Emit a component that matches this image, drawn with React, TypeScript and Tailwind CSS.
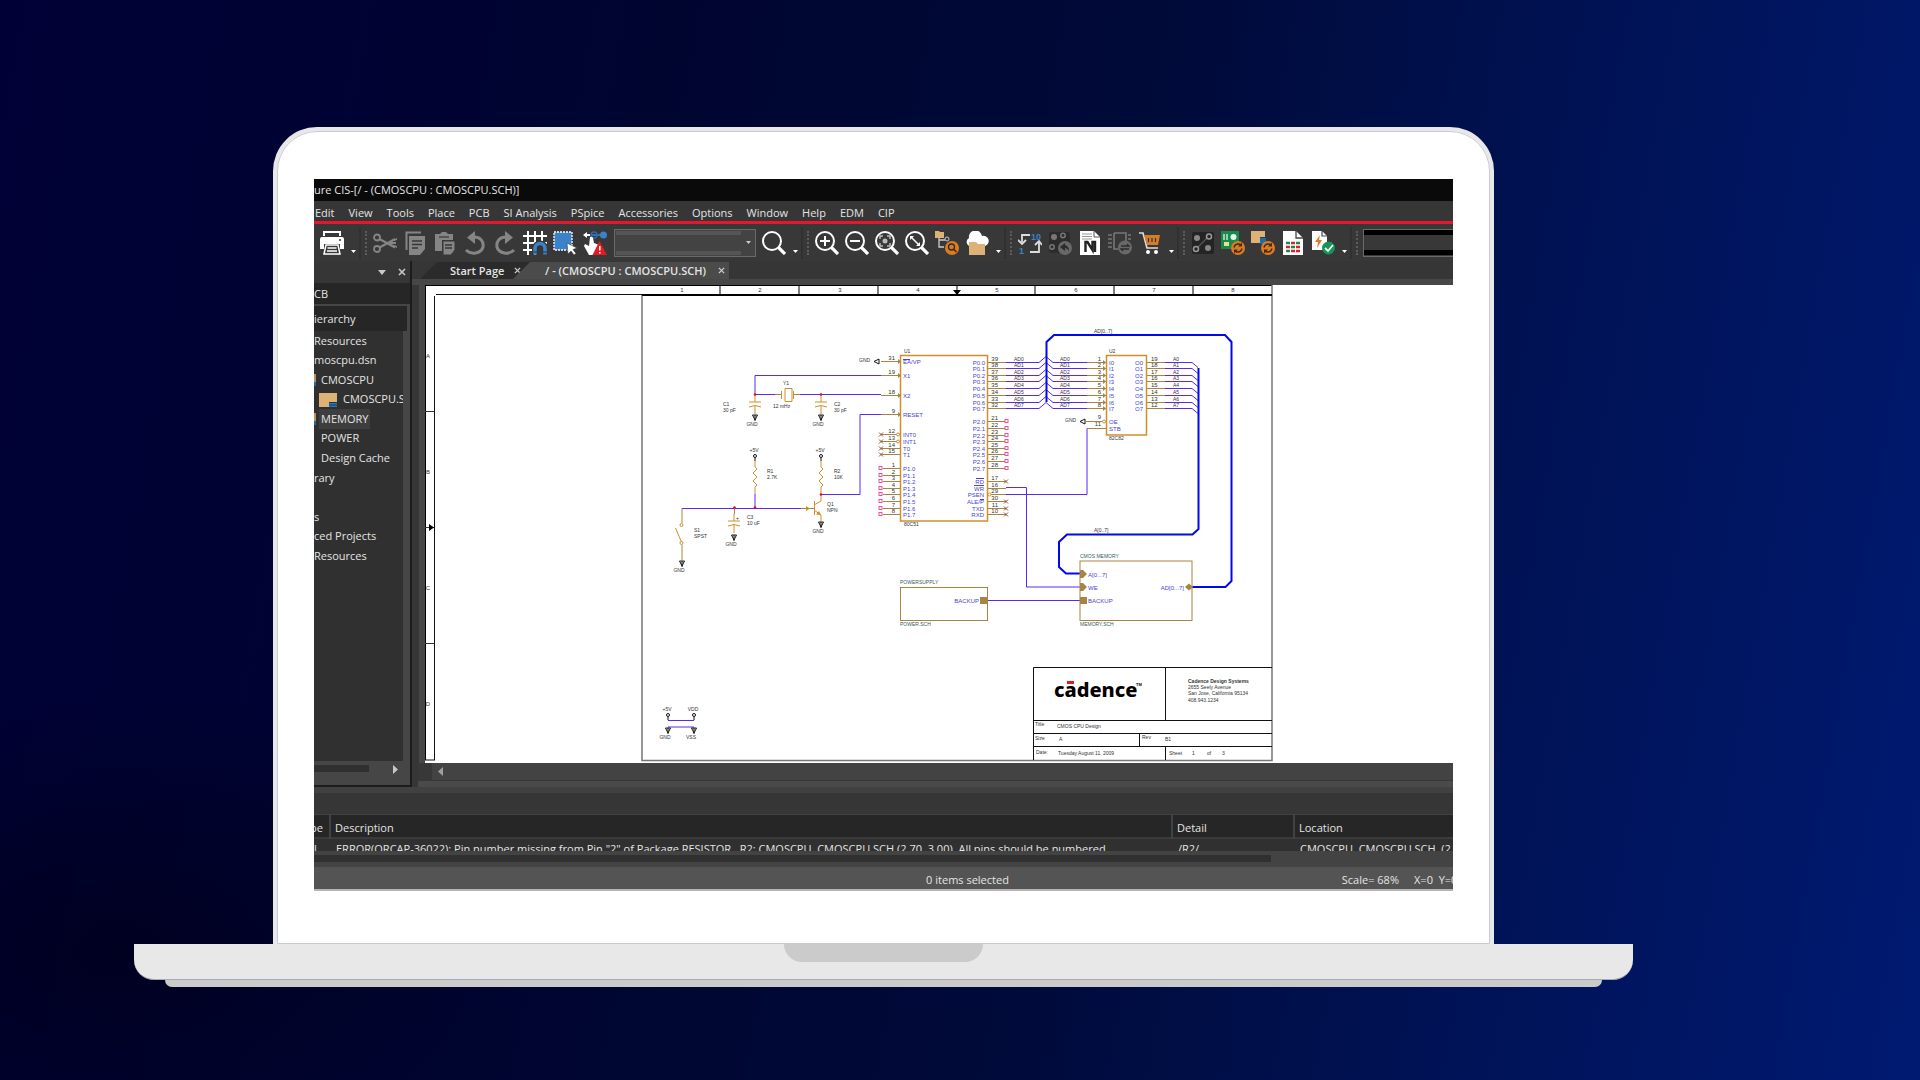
import type { ReactNode } from "react";

const WIRE = "#5a28f0";
const PIN = "#a88442";
const PART = "#cf8f2a";
const NAME = "#4a3fd0";
const INK = "#333333";
const BUS = "#0008ee";

/* ---------- toolbar icons (24x24) ---------- */

function Ico({ children }: { children: ReactNode }) {
  return (
    <svg viewBox="0 0 24 24" className="size-6 shrink-0" fill="none" aria-hidden="true">
      {children}
    </svg>
  );
}

const GREY = "#858585";

const Printer = () => (
  <Ico>
    <path d="M4 5V1h16v4" stroke="#fff" strokeWidth="2" />
    <path d="M2 6h20q2 0 2 2v10h-4v-5H4v5H0V8q0-2 2-2z" fill="#fff" />
    <path d="M4 23l2-9h12l2 9z" stroke="#fff" strokeWidth="1.5" />
    <path d="M7.500 17h9M7 20h10" stroke="#fff" strokeWidth="1.500" />
    <circle cx="20" cy="9" r="1" fill="#333" />
  </Ico>
);
const Cut = () => (
  <Ico>
    <circle cx="4" cy="6.500" r="3" stroke={GREY} strokeWidth="1.800" />
    <circle cx="4" cy="18" r="3" stroke={GREY} strokeWidth="1.800" />
    <path d="M6.500 8L22 16.500M6.500 16.500L22 8M14 12h9" stroke={GREY} strokeWidth="2" />
    <path d="M14 12l10-5v2zM14 12l10 5v-2z" fill={GREY} />
  </Ico>
);
const Copy = () => (
  <Ico>
    <path d="M3.500 19V1.500H18" stroke={GREY} strokeWidth="2" />
    <path d="M6 5h16v13l-5 6H6z" fill={GREY} />
    <path d="M9 10h10M9 13.500h10M9 17h6" stroke="#363636" strokeWidth="1.400" />
  </Ico>
);
const Paste = () => (
  <Ico>
    <path d="M2 3h5l2-2h4l2 2h5v6H9v11H2z" fill={GREY} />
    <path d="M6 6h10" stroke="#363636" strokeWidth="1.200" />
    <path d="M10 10h12v9l-4 5h-8z" fill={GREY} stroke="#363636" strokeWidth="1" />
    <path d="M12 14h7M12 17h7" stroke="#363636" strokeWidth="1.300" />
  </Ico>
);
const Undo = () => (
  <Ico>
    <path d="M3 19c5 5 15 4 17-3 1-6-3-10-9-10" stroke={GREY} strokeWidth="3" />
    <path d="M4 6.500L12 0v13z" fill={GREY} />
  </Ico>
);
const Redo = () => (
  <Ico>
    <path d="M21 19c-5 5-15 4-17-3-1-6 3-10 9-10" stroke={GREY} strokeWidth="3" />
    <path d="M20 6.500L12 0v13z" fill={GREY} />
  </Ico>
);
const GridMagnet = () => (
  <Ico>
    <path d="M5 0v24M12 0v24M19 0v10M0 5h24M0 12h24M0 19h9" stroke="#fff" strokeWidth="2" />
    <path d="M12 23.500v-6a5 5 0 0 1 10 0v6" stroke="#363636" strokeWidth="6" />
    <path d="M12 23.500v-6a5 5 0 0 1 10 0v6" stroke="#3b82c8" strokeWidth="3.600" />
    <path d="M10 21h4M20 21h4" stroke="#363636" strokeWidth="1" />
  </Ico>
);
const SelectArea = () => (
  <Ico>
    <rect x="1" y="1" width="18" height="18" fill="#3b82c8" stroke="#fff" strokeWidth="1.300" strokeDasharray="2 1" />
    <path d="M14 12l10 5-4 1.500 3 4-2 1.500-3-4-3 3z" fill="#fff" stroke="#363636" strokeWidth=".6" />
  </Ico>
);
const HandWarn = () => (
  <Ico>
    <path d="M8 4h12" stroke="#3b82c8" strokeWidth="1.500" />
    <circle cx="11" cy="4" r="3" stroke="#2b6aa8" strokeWidth="1.500" />
    <circle cx="20.500" cy="4" r="3.500" fill="#3b82c8" />
    <path d="M0 4l4-3v2h3v2H4v2z" fill="#fff" />
    <path d="M7 6q2-1 3 1l1 5 5 2v4l-3 6H6L1 15l1-2 4 2z" fill="#fff" />
    <path d="M16.500 10L24 24H9.500z" fill="#e01b24" />
    <path d="M16.800 15v4.500M16.800 21v1.500" stroke="#fff" strokeWidth="1.500" />
  </Ico>
);
function Lens({ children }: { children?: ReactNode }) {
  return (
    <Ico>
      <circle cx="10" cy="10" r="9" stroke="#fff" strokeWidth="2" />
      <path d="M16.500 16.500L23 23" stroke="#fff" strokeWidth="3.200" />
      {children}
    </Ico>
  );
}
const ZoomIn = () => (
  <Lens>
    <path d="M10 5v10M5 10h10" stroke="#fff" strokeWidth="2" />
  </Lens>
);
const ZoomOut = () => (
  <Lens>
    <path d="M5 10h10" stroke="#fff" strokeWidth="2" />
  </Lens>
);
const ZoomFit = () => (
  <Lens>
    <path d="M5 8V5h3M12 5h3v3M15 12v3h-3M8 15H5v-3" stroke="#bbb" strokeWidth="1.500" />
    <circle cx="10" cy="10" r="2.500" fill="#bbb" />
  </Lens>
);
const ZoomArea = () => (
  <Lens>
    <path d="M6 6l8 8" stroke="#fff" strokeWidth="1.500" />
    <path d="M5 5h4L5 9zM15 15v-4l-4 4z" fill="#fff" />
  </Lens>
);
const TreeFind = () => (
  <Ico>
    <path d="M0 0h4l1 1h4v6H0z" fill="#dcb276" />
    <path d="M4 7v9h5M4 9h6" stroke="#ccc" strokeWidth="1.300" />
    <circle cx="12" cy="8" r="2" stroke="#ccc" />
    <circle cx="17" cy="17" r="7" fill="#d87d24" />
    <circle cx="16.500" cy="16" r="3" stroke="#3a2a1a" strokeWidth="1.300" />
    <path d="M18.500 18l3 3" stroke="#3a2a1a" strokeWidth="1.500" />
  </Ico>
);
const CloudFolder = () => (
  <Ico>
    <path d="M4 15a4.500 4.500 0 0 1 0-8 6.500 6.500 0 0 1 13-2 5 5 0 0 1 3 10z" fill="#fff" />
    <path d="M4 11h7l2 2h7v11H4z" fill="#dcb276" />
  </Ico>
);
const Annotate = () => (
  <Ico>
    <path d="M12 4H4v7M12 21h9v-9" stroke="#ddd" strokeWidth="1.800" />
    <path d="M0 9l4 4 4-4M17 14l4-4 3 4" stroke="#ddd" strokeWidth="1.800" />
    <text x="13" y="9" fontSize="9" fontWeight="700" fill="#3b82c8" fontFamily="Liberation Sans, sans-serif">10</text>
    <text x="1" y="23" fontSize="9" fontWeight="700" fill="#3b82c8" fontFamily="Liberation Sans, sans-serif">1</text>
  </Ico>
);
const BackAnnotate = () => (
  <Ico>
    <rect x="1" y="1" width="21" height="21" rx="2" fill="#2c2c2c" />
    <circle cx="6" cy="6" r="3" fill="#777" />
    <circle cx="15" cy="4.500" r="2.200" stroke="#777" strokeWidth="1.500" />
    <circle cx="4" cy="16" r="2.200" stroke="#777" strokeWidth="1.500" />
    <circle cx="17" cy="17" r="7" fill="#686868" />
    <path d="M12 16l5-4v2q4 1 4 6-2-3-4-3v3z" fill="#2c2c2c" />
  </Ico>
);
const Netlist = () => (
  <Ico>
    <path d="M2 0h14l6 6v18H2z" fill="#fff" />
    <path d="M4 3h10M4 5.500h10M4 8h10" stroke="#999" />
    <path d="M16 0v6h6" stroke="#555" />
    <path d="M7.500 21V11h2l5 8v-8h2.500v10" stroke="#222" strokeWidth="2.400" />
  </Ico>
);
const ChipSync = () => (
  <Ico>
    <path d="M14 2h4v8M6 2v16h7M6 2h8" stroke="#777" strokeWidth="1.600" />
    <path d="M0 4h4M0 8h4M0 12h4M0 16h4M20 4h3M20 8h3" stroke="#777" strokeWidth="1.500" />
    <circle cx="17" cy="16.500" r="7" fill="#686868" />
    <path d="M13 15h8l-2-2M21 18h-8l2 2" stroke="#2c2c2c" strokeWidth="1.300" />
  </Ico>
);
const Cart = () => (
  <Ico>
    <path d="M1 2h4l4 15h11" stroke="#ddd" strokeWidth="1.700" />
    <path d="M6 4h16l-2 10H9z" fill="#d87d24" />
    <path d="M10.500 7v4M14 7v4M17.500 7v4" stroke="#333" strokeWidth="1.200" />
    <circle cx="10" cy="21" r="2" fill="#fff" />
    <circle cx="18" cy="21" r="2" fill="#fff" />
  </Ico>
);
const Nodes = () => (
  <Ico>
    <rect x="1" y="1" width="22" height="22" rx="2" fill="#242424" />
    <path d="M7 16L16 7" stroke="#555" strokeWidth="1.200" />
    <circle cx="6" cy="7" r="3" fill="#888" />
    <circle cx="17" cy="17" r="3" fill="#888" />
    <circle cx="18" cy="5.500" r="2.500" fill="#242424" stroke="#999" strokeWidth="1.500" />
    <circle cx="5" cy="18" r="2.500" fill="#242424" stroke="#999" strokeWidth="1.500" />
  </Ico>
);
const SyncBadge = () => (
  <>
    <circle cx="17" cy="17" r="7" fill="#d87d24" />
    <path d="M13 16.500q1-4 5-3.500l2 1M21 17.500q-1 4-5 3.500l-2-1" stroke="#4a2a10" strokeWidth="1.400" />
    <path d="M21 11.500v4h-4zM13 22.500v-4h4z" fill="#4a2a10" />
  </>
);
const BoardSync = () => (
  <Ico>
    <path d="M0 0h18v18H0z" fill="#178a4c" />
    <path d="M3 3v6M6 3v6" stroke="#bfe8cf" strokeWidth="1.500" />
    <circle cx="12.500" cy="6" r="3" fill="#e4f3ea" />
    <path d="M3 11h5v4H3z" fill="#f3d98c" />
    <SyncBadge />
  </Ico>
);
const SchematicSync = () => (
  <Ico>
    <path d="M0 0h14v6H9v6H0z" fill="#dcb276" />
    <path d="M9 7h6v6H9z" fill="#1d6ca5" />
    <SyncBadge />
  </Ico>
);
const SheetPage = () => (
  <Ico>
    <path d="M2 0h13l7 7v17H2z" fill="#fff" />
    <path d="M15 0v7h7" stroke="#444" strokeWidth="1.300" />
    <path d="M5 12h4M15 12h4M10 16h4M5 20h4" stroke="#178a4c" strokeWidth="2.500" />
    <path d="M10 12h4M5 16h4M15 16h4M10 20h4M15 20h4" stroke="#d5222c" strokeWidth="2.500" />
  </Ico>
);
const PageCheck = () => (
  <Ico>
    <path d="M1 0h10l5 5v14H1z" fill="#fff" />
    <path d="M11 0v5h5" stroke="#444" strokeWidth="1.200" />
    <path d="M9 4l-5 7h3l-1 6 5-8H8z" fill="#d87d24" />
    <circle cx="17.500" cy="17" r="6.500" fill="#159455" />
    <path d="M14 17l3 3 5-6" stroke="#fff" strokeWidth="1.800" />
  </Ico>
);

/* ---------- toolbar pieces ---------- */

function Tool({ label, children }: { label: string; children: ReactNode }) {
  return (
    <button type="button" aria-label={label} className="flex w-[30px] shrink-0 items-center justify-center">
      {children}
    </button>
  );
}

function More() {
  return (
    <button type="button" aria-label="More tools" className="flex h-7 w-3 shrink-0 items-end justify-center pb-1">
      <svg viewBox="0 0 5 3" className="h-[3px] w-[5px]" aria-hidden="true">
        <path d="M0 0h5L2.500 3z" fill="#fff" />
      </svg>
    </button>
  );
}

function Grip() {
  return (
    <div className="flex h-8 w-[11px] shrink-0 items-center justify-center border-l-2 border-[#313131]">
      <div className="h-6 border-l-2 border-dotted border-[#5c5c5c]" />
    </div>
  );
}

/* ---------- schematic ---------- */

function T({
  x, y, children, c = INK, s = 5, a = "start", b = false,
}: {
  x: number; y: number; children: ReactNode; c?: string; s?: number; a?: "start" | "middle" | "end"; b?: boolean;
}) {
  return (
    <text x={x} y={y} fill={c} fontSize={s} textAnchor={a} fontWeight={b ? 700 : 400}>
      {children}
    </text>
  );
}

const L = ({ d, c = PIN, w = 1 }: { d: string; c?: string; w?: number }) => (
  <path d={d} stroke={c} strokeWidth={w} fill="none" />
);

const Cross = ({ x, y }: { x: number; y: number }) => (
  <L d={`M${x - 2} ${y - 2}l4 4m0-4l-4 4`} c="#8a5530" />
);
const Square = ({ x, y }: { x: number; y: number }) => (
  <rect x={x - 1.5} y={y - 1.5} width="3" height="3" fill="#fff" stroke="#f0509a" />
);
const Dot = ({ x, y }: { x: number; y: number }) => <circle cx={x} cy={y} r="1.300" fill="#e01020" />;

function Ground({ x, y, name = "GND" }: { x: number; y: number; name?: string }) {
  return (
    <g>
      <path d={`M${x - 2.5} ${y}h5l-2.500 5zm2.500 0v6`} stroke="#111" fill="none" />
      <T x={x - 3} y={y + 11} a="middle">{name}</T>
    </g>
  );
}
function Power({ x, y, name = "+5V" }: { x: number; y: number; name?: string }) {
  return (
    <g>
      <T x={x - 1} y={y - 4} a="middle">{name}</T>
      <circle cx={x} cy={y} r="1.500" stroke="#111" fill="none" />
      <L d={`M${x} ${y + 2}v3`} c="#111" />
    </g>
  );
}
function Cap({ x, y }: { x: number; y: number }) {
  return <L c={PART} d={`M${x} ${y}v7m-6 0h12m-12 5q6-3 12 0m-6-1v8`} />;
}
function Resistor({ x }: { x: number }) {
  return <L c={PART} d={`M${x} 461v6l2 2-4 4 4 4-4 4 4 4-2 2v7`} />;
}

const DATA_Y = [362, 368, 375, 381, 388, 395, 402, 408];
const P2_Y = [421, 428, 435, 441, 448, 454, 461, 468];
const P1_Y = [468, 475, 481, 488, 494, 501, 508, 514];
const LEFT_PINS: [string, string, number][] = [["31", "EA/VP", 361], ["19", "X1", 375], ["18", "X2", 395], ["9", "RESET", 414]];
const INT_PINS: [string, string, number][] = [["12", "INT0", 434], ["13", "INT1", 441], ["14", "T0", 448], ["15", "T1", 454]];
const CTRL_PINS: [string, string, number, boolean][] = [
  ["17", "RD", 481, true], ["16", "WR", 488, false], ["29", "PSEN", 494, false],
  ["30", "ALE/P", 501, true], ["11", "TXD", 508, true], ["10", "RXD", 514, true],
];
const TICKS = [720, 799, 878, 957, 1035, 1114, 1193];
const COLS = [682, 760, 840, 918, 997, 1076, 1154, 1233];

function Schematic() {
  return (
    <svg
      viewBox="425 285 1028 478"
      className="h-[478px] w-[1028px] max-w-none shrink-0 bg-white [font-family:'Liberation_Sans',Arial,sans-serif]"
      role="img"
      aria-label="CMOSCPU schematic page"
    >
      <path d="M425 285.500H1272M425.500 285V760" stroke="#000" />
      <path d="M436 294.500H1272M434.500 296V760M425 760h10" stroke="#111" strokeWidth="1" />
      <path d="M642 295V760.500H1272V285" stroke="#777" fill="none" strokeWidth="1.500" />
      <path d="M642 295h630" stroke="#000" strokeWidth="2" />
      {TICKS.map((x) => <L key={x} d={`M${x} 286v8`} c="#555" w={1.5} />)}
      {COLS.map((x, i) => <T key={x} x={x} y={292} a="middle" s={6}>{i + 1}</T>)}
      {["A", "B", "C", "D"].map((n, i) => <T key={n} x={428} y={358 + i * 116} a="middle" s={6}>{n}</T>)}
      <L d="M425 411.500h9M425 643.500h9M425 527.500h9" c="#333" />
      <path d="M429 524v7l5-3.500zM953 290h8l-4 5z" fill="#000" />

      {/* processor */}
      <rect x="900.500" y="355.500" width="87" height="165.500" stroke={PART} fill="none" strokeWidth="1.500" />
      <T x={904} y={353}>U1</T>
      <T x={904} y={526}>80C51</T>
      {LEFT_PINS.map(([n, name, y]) => (
        <g key={n}>
          <L d={`M881 ${y + 0.5}h19`} />
          <path d={`M898 ${y - 2}v5l3-2.500z`} fill={PIN} />
          <T x={895} y={y - 1} a="end" s={6}>{n}</T>
          <T x={903} y={y + 3} c={NAME} s={6}>{name}</T>
        </g>
      ))}
      <L d="M903 359.500h7" c={NAME} />
      {INT_PINS.map(([n, name, y], i) => (
        <g key={n}>
          <L d={`M881 ${y + 0.5}h19`} />
          {i < 2 && <circle cx="898" cy={y + 0.5} r="1.500" fill="#fff" stroke={PART} />}
          <Cross x={881} y={y + 0.5} />
          <T x={895} y={y - 1} a="end" s={6}>{n}</T>
          <T x={903} y={y + 3} c={NAME} s={6}>{name}</T>
        </g>
      ))}
      {P1_Y.map((y, i) => (
        <g key={y}>
          <L d={`M883 ${y + 0.5}h17`} />
          <Square x={880.5} y={y} />
          <T x={895} y={y - 1} a="end" s={6}>{i + 1}</T>
          <T x={903} y={y + 3} c={NAME} s={6}>{`P1.${i}`}</T>
        </g>
      ))}
      {P2_Y.map((y, i) => (
        <g key={y}>
          <L d={`M988 ${y + 0.5}h17`} />
          <Square x={1006.5} y={y} />
          <T x={998} y={y - 1} a="end" s={6}>{21 + i}</T>
          <T x={985} y={y + 3} c={NAME} s={6} a="end">{`P2.${i}`}</T>
        </g>
      ))}
      {CTRL_PINS.map(([n, name, y, nc]) => (
        <g key={n}>
          <L d={`M988 ${y + 0.5}h18`} />
          {nc && <Cross x={1006} y={y + 0.5} />}
          <T x={998} y={y - 1} a="end" s={6}>{n}</T>
          <T x={984} y={y + 3} c={NAME} s={6} a="end">{name}</T>
        </g>
      ))}
      <circle cx="989.500" cy="494.500" r="1.500" fill="#fff" stroke={PART} />
      <L d="M976 478.500h8M974 485.500h10M980 499.500h4" c={NAME} />

      {/* data lines and latch */}
      {DATA_Y.map((y, i) => (
        <g key={y}>
          <L d={`M988 ${y + 0.5}h18M1087 ${y + 0.5}h19M1146 ${y + 0.5}h19`} />
          <L d={`M1006 ${y + 0.5}h33l7-6l7 6h34M1165 ${y + 0.5}h27l6 5`} c={WIRE} />
          <path d={`M1103 ${y - 2}v5l3-2.500z`} fill={PIN} />
          <T x={998} y={y - 1} a="end" s={6}>{39 - i}</T>
          <T x={985} y={y + 3} c={NAME} s={6} a="end">{`P0.${i}`}</T>
          <T x={1014} y={y - 1}>{`AD${i}`}</T>
          <T x={1060} y={y - 1}>{`AD${i}`}</T>
          <T x={1173} y={y - 1}>{`A${i}`}</T>
          <T x={1101} y={y - 1} a="end" s={6}>{i + 1}</T>
          <T x={1109} y={y + 3} c={NAME} s={6}>{`I${i}`}</T>
          <T x={1143} y={y + 3} c={NAME} s={6} a="end">{`O${i}`}</T>
          <T x={1151} y={y - 1} s={6}>{19 - i}</T>
        </g>
      ))}
      <rect x="1106.500" y="355.500" width="40" height="79.500" stroke={PART} fill="none" strokeWidth="1.500" />
      <T x={1109} y={353}>U2</T>
      <T x={1109} y={440}>82C82</T>
      <L d="M1086 421.500h20M1087 428.500h19" />
      <circle cx="1104" cy="421.500" r="1.500" fill="#fff" stroke={PART} />
      <T x={1101} y={419} a="end" s={6}>9</T>
      <T x={1101} y={426} a="end" s={6}>11</T>
      <T x={1109} y={424} c={NAME} s={6}>OE</T>
      <T x={1109} y={431} c={NAME} s={6}>STB</T>
      <T x={1065} y={422}>GND</T>
      <path d="M1085 419v5l-5-2.500z" stroke="#111" fill="none" />
      <T x={859} y={362}>GND</T>
      <path d="M879 359v5l-5-2.500z" stroke="#111" fill="none" />
      <L d="M1006 494.500h81v-66M1006 487.500h20.500v99.500h53.500M988 600.500h92" c={WIRE} />

      {/* buses */}
      <L d="M1046.500 402v-60l7.500-7h171l6.500 7v239l-6 6H1190" c={BUS} w={2} />
      <L d="M1198.500 368v161l-6 5.500h-125.500l-8 7.500v25l7 6.500h14" c={BUS} w={2} />
      <T x={1094} y={333}>AD[0..7]</T>
      <T x={1094} y={532}>A[0..7]</T>

      {/* hierarchical blocks */}
      <rect x="900.500" y="587.500" width="87" height="33" stroke={PIN} fill="none" />
      <T x={900} y={584} c="#36605c">POWERSUPPLY</T>
      <T x={900} y={626} c="#36605c">POWER.SCH</T>
      <T x={979} y={603} c={NAME} s={6} a="end">BACKUP</T>
      <path d="M980 597h7v7h-7zM1080 597h7v7h-7z" fill={PIN} />
      <rect x="1080" y="561" width="112" height="59.500" stroke={PIN} fill="none" />
      <T x={1080} y={558} c="#36605c">CMOS MEMORY</T>
      <T x={1080} y={626} c="#36605c">MEMORY.SCH</T>
      <path d="M1080 570h3l4 4-4 4h-3zM1080 583h3l4 4-4 4h-3zM1185 587l4-3.500 4 3.500-4 3.500z" fill={PIN} />
      <T x={1088} y={577} c={NAME} s={6}>A[0...7]</T>
      <T x={1088} y={590} c={NAME} s={6}>WE</T>
      <T x={1088} y={603} c={NAME} s={6}>BACKUP</T>
      <T x={1184} y={590} c={NAME} s={6} a="end">AD[0...7]</T>

      {/* clock, reset and power parts */}
      <L d="M881 375.500H755V395M755 394.500h20M800 394.500h81M881 414.500h-21v80h-39M682 508.500h119M755 508v-14" c={WIRE} />
      <L d="M775 394.500h6M793 394.500h7M801 508.500h13M682 508v15M682 545v15" />
      <L d="M781.500 391v8M793.500 391v8M785 388.500h7v13h-7z" c={PART} />
      <Cap x={755} y={395} />
      <Cap x={821} y={395} />
      <Cap x={734} y={514} />
      <L d="M734.500 508v6" />
      <Ground x={755} y={415} />
      <Ground x={821} y={415} />
      <Ground x={734} y={535} />
      <Ground x={682} y={561} />
      <Ground x={821} y={522} />
      <Power x={755} y={456} />
      <Power x={821} y={456} />
      <Resistor x={755} />
      <Resistor x={821} />
      <L d="M814.500 501v14M814 505l7-4v-7M814 510l7 5v6" c={PART} />
      <path d="M821 515l-5-.5 3-3.500zM806 506v5l4-2.500z" fill={PART} />
      <circle cx="681.500" cy="525" r="1.500" fill="#fff" stroke={PART} />
      <circle cx="681.500" cy="543" r="1.500" fill="#fff" stroke={PART} />
      <L d="M675.500 528l6 14" c={PART} />
      <Dot x={755} y={394.5} /><Dot x={821} y={394.5} /><Dot x={821} y={494.5} />
      <Dot x={755} y={507.5} /><Dot x={734.5} y={507.5} />
      <T x={783} y={385}>Y1</T><T x={773} y={408}>12 mHz</T>
      <T x={723} y={406}>C1</T><T x={723} y={412}>30 pF</T>
      <T x={834} y={406}>C2</T><T x={834} y={412}>30 pF</T>
      <T x={767} y={473}>R1</T><T x={767} y={479}>2.7K</T>
      <T x={834} y={473}>R2</T><T x={834} y={479}>10K</T>
      <T x={827} y={506}>Q1</T><T x={827} y={512}>NPN</T>
      <T x={747} y={519}>C3</T><T x={747} y={525}>10 uF</T><T x={736} y={520}>+</T>
      <T x={694} y={532}>S1</T><T x={694} y={538}>SPST</T>
      <Power x={668} y={715} /><Power x={694} y={715} name="VDD" />
      <L d="M668 720.500h26M668 727h26" c={WIRE} />
      <Ground x={668} y={728} /><Ground x={694} y={728} name="VSS" />

      {/* title block */}
      <path d="M1033.500 760V667.500H1272M1165.500 667v53M1033 720.500h239M1033 733.500h239M1033 746.500h239M1139.500 733v13M1165.500 746v14" stroke="#111" fill="none" />
      <text x="1054" y="697" fontSize="20" fontWeight="800" fill="#000" fontFamily="Noto Sans, Open Sans, sans-serif">cadence</text>
      <rect x="1067" y="681" width="7" height="3" fill="#e01b24" />
      <T x={1136} y={686} s={4} c="#000" b>TM</T>
      <T x={1188} y={683} b>Cadence Design Systems</T>
      <T x={1188} y={689}>2655 Seely Avenue</T>
      <T x={1188} y={695}>San Jose, California 95134</T>
      <T x={1188} y={702}>408.943.1234</T>
      <T x={1035} y={726}>Title</T><T x={1057} y={728}>CMOS CPU Design</T>
      <T x={1035} y={740}>Size</T><T x={1059} y={741}>A</T>
      <T x={1142} y={739}>Rev</T><T x={1165} y={741}>B1</T>
      <T x={1036} y={754}>Date:</T><T x={1058} y={755}>Tuesday August 11, 2009</T>
      <T x={1169} y={755}>Sheet</T><T x={1192} y={755}>1</T><T x={1207} y={755}>of</T><T x={1222} y={755}>3</T>
    </svg>
  );
}

/* ---------- window ---------- */

const MENU = ["Edit", "View", "Tools", "Place", "PCB", "SI Analysis", "PSpice", "Accessories", "Options", "Window", "Help", "EDM", "CIP"];

const PageIcon = () => (
  <svg viewBox="0 0 18 14" className="mr-1.5 h-3.5 w-[18px] shrink-0" aria-hidden="true">
    <path d="M0 0h18v9h-8v5H0z" fill="#dcb276" />
    <path d="M10 10h8v4h-8z" fill="#1f78b8" />
    <path d="M10 12h8" stroke="#16405f" />
  </svg>
);

const FolderEdge = () => (
  <svg viewBox="0 0 2 12" className="mr-[5px] h-3 w-0.5 shrink-0" aria-hidden="true">
    <path d="M0 0h2v8H0z" fill="#b8935f" />
    <path d="M0 8h2v4H0z" fill="#1f6aa0" />
  </svg>
);

function ProjectPanel() {
  return (
    <aside className="flex w-[98px] shrink-0 flex-col border-r-2 border-b-2 border-[#1c1c1c] bg-[#464646]">
      <div className="flex h-[22px] items-center justify-end gap-3 bg-[#363636] pr-1">
        <button type="button" aria-label="Panel menu">
          <svg viewBox="0 0 8 5" className="h-[5px] w-2"><path d="M0 0h8L4 5z" fill="#c8c8c8" /></svg>
        </button>
        <button type="button" aria-label="Close panel">
          <svg viewBox="0 0 8 8" className="size-2"><path d="M1 1l6 6M7 1L1 7" stroke="#c8c8c8" strokeWidth="1.600" /></svg>
        </button>
      </div>
      <div className="flex h-[21px] items-center bg-[#262626] text-[11px] leading-none">CB</div>
      <div className="mt-0.5 mr-[3px] flex h-[25px] items-center bg-[#262626] pt-0.5 text-[11px]">ierarchy</div>
      <ul className="mr-[7px] grid h-[235px] grid-rows-12 items-center overflow-hidden bg-[#303030] text-[11px] whitespace-nowrap">
        <li>Resources</li>
        <li>moscpu.dsn</li>
        <li className="flex items-center"><FolderEdge />CMOSCPU</li>
        <li className="flex items-center pl-[5px]"><PageIcon />CMOSCPU.SCH</li>
        <li className="flex items-center"><FolderEdge /><span className="-ml-0.5 bg-[#3e3e3e] px-0.5 py-0.5">MEMORY</span></li>
        <li className="pl-[7px]">POWER</li>
        <li className="pl-[7px]">Design Cache</li>
        <li>rary</li>
        <li />
        <li>s</li>
        <li>ced Projects</li>
        <li>Resources</li>
      </ul>
      <div className="mr-[7px] grow bg-[#303030]" />
      <div className="flex h-6 items-start justify-between pt-1 pr-3">
        <div className="h-[7px] w-[55px] bg-[#303030]" />
        <button type="button" aria-label="Scroll right">
          <svg viewBox="0 0 5 9" className="h-[9px] w-[5px]"><path d="M0 0l5 4.500L0 9z" fill="#c8c8c8" /></svg>
        </button>
      </div>
    </aside>
  );
}

function Close({ label }: { label: string }) {
  return (
    <button type="button" aria-label={label}>
      <svg viewBox="0 0 8 8" className="size-[7px]"><path d="M1 1l6 6M7 1L1 7" stroke="#c8c8c8" strokeWidth="1.600" /></svg>
    </button>
  );
}

function Tabs() {
  return (
    <div className="h-6 border-b-[6px] border-[#474747] bg-[#363636] pt-px pl-2">
      <div className="flex h-[17px] text-[11px] leading-none font-semibold">
        <div className="flex w-[112px] items-center justify-between bg-[#2b2b2b] pr-[11px] pl-[30px] [clip-path:polygon(17px_0,100%_0,100%_100%,0_100%)]">
          <button type="button" className="whitespace-nowrap">Start Page</button>
          <Close label="Close Start Page" />
        </div>
        <div className="-ml-[19px] flex items-center gap-3 bg-[#4b4b4b] pr-1 pl-8 [clip-path:polygon(17px_0,100%_0,100%_100%,0_100%)]">
          <button type="button" className="whitespace-nowrap">/ - (CMOSCPU : CMOSCPU.SCH)</button>
          <Close label="Close schematic" />
        </div>
      </div>
    </div>
  );
}

function Toolbar() {
  return (
    <div className="flex h-[37px] items-center overflow-hidden bg-[#383838] pl-[3px]">
      <Tool label="Print"><Printer /></Tool>
      <More /><Grip />
      <Tool label="Cut"><Cut /></Tool>
      <Tool label="Copy"><Copy /></Tool>
      <Tool label="Paste"><Paste /></Tool>
      <Tool label="Undo"><Undo /></Tool>
      <Tool label="Redo"><Redo /></Tool>
      <Tool label="Snap to grid"><GridMagnet /></Tool>
      <Tool label="Area select"><SelectArea /></Tool>
      <Tool label="Drag connected"><HandWarn /></Tool>
      <div className="relative mr-[3px] ml-1 h-7 w-[142px] shrink-0">
        <select
          aria-label="Place part"
          className="h-7 w-full appearance-none border border-[#6a6a6a] bg-[#434343] bg-[linear-gradient(#555_4px,transparent_4px,transparent_20px,#555_20px)] bg-[length:125px_24px] bg-[position:1px_1px] bg-no-repeat"
        />
        <svg viewBox="0 0 5 3" className="pointer-events-none absolute top-3 right-[5px] h-[3px] w-[5px]"><path d="M0 0h5L2.500 3z" fill="#ccc" /></svg>
      </div>
      <Tool label="Search"><Lens /></Tool>
      <More /><Grip />
      <Tool label="Zoom in"><ZoomIn /></Tool>
      <Tool label="Zoom out"><ZoomOut /></Tool>
      <Tool label="Zoom to fit"><ZoomFit /></Tool>
      <Tool label="Zoom to area"><ZoomArea /></Tool>
      <Tool label="Find in hierarchy"><TreeFind /></Tool>
      <Tool label="Cloud folder"><CloudFolder /></Tool>
      <More /><Grip />
      <Tool label="Annotate"><Annotate /></Tool>
      <Tool label="Back annotate"><BackAnnotate /></Tool>
      <Tool label="Netlist"><Netlist /></Tool>
      <Tool label="Sync parts"><ChipSync /></Tool>
      <Tool label="Bill of materials"><Cart /></Tool>
      <More /><Grip />
      <Tool label="Nets"><Nodes /></Tool>
      <Tool label="Update board"><BoardSync /></Tool>
      <Tool label="Update schematic"><SchematicSync /></Tool>
      <Tool label="Report"><SheetPage /></Tool>
      <Tool label="Design rules check"><PageCheck /></Tool>
      <More /><Grip />
      <select
        aria-label="Simulation profile"
        className="ml-0.5 h-7 w-[142px] shrink-0 appearance-none border border-[#6a6a6a] bg-[#383838] bg-[linear-gradient(#000_5px,transparent_5px,transparent_20px,#000_20px)] bg-[length:100%_25px] bg-no-repeat"
      />
    </div>
  );
}

function Log() {
  return (
    <section>
      <div className="h-[6px] bg-[#414141]" />
      <div className="h-[22px] border-b border-[#424242] bg-[#363636]" />
      <div className="h-9 overflow-hidden bg-[#303030]">
        <table className="w-full table-fixed border-collapse text-left text-[11px] whitespace-nowrap">
          <colgroup>
            <col className="w-4" />
            <col />
            <col className="w-[122px]" />
            <col className="w-[159px]" />
          </colgroup>
          <thead>
            <tr className="h-[23px] border-b-2 border-[#3a3a3a] bg-[#262626] leading-none">
              <th className="overflow-hidden border-r-2 border-[#424242] p-0 pt-0.5 font-normal"><span className="-ml-1">pe</span></th>
              <th className="border-r-2 border-[#424242] p-0 pt-0.5 pl-1 font-normal">Description</th>
              <th className="border-r-2 border-[#424242] p-0 pt-0.5 pl-1 font-normal">Detail</th>
              <th className="p-0 pt-0.5 pl-1 font-normal">Location</th>
            </tr>
          </thead>
          <tbody>
            <tr className="h-5 leading-none">
              <td className="overflow-hidden p-0">l</td>
              <td className="overflow-hidden p-0 pl-[6px]">
                ERROR(ORCAP-36022): Pin number missing from Pin "2" of Package RESISTOR , R2: CMOSCPU, CMOSCPU.SCH (2.70, 3.00). All pins should be numbered.
              </td>
              <td className="p-0 pl-[6px]">/R2/</td>
              <td className="overflow-hidden p-0 pl-[6px]">CMOSCPU, CMOSCPU.SCH, (2.70, 3.00)</td>
            </tr>
          </tbody>
        </table>
      </div>
      <div className="h-4 bg-[#434343] pt-1">
        <div className="mr-[182px] h-[7px] bg-[#303030]" />
      </div>
    </section>
  );
}

function CaptureWindow() {
  return (
    <div className="overflow-hidden text-[#e4e4e4] [font-family:'Open_Sans','Noto_Sans',sans-serif]">
      <header className="flex h-[22px] items-center overflow-hidden bg-[#0a0a0a] text-[11px] whitespace-nowrap">
        ure CIS-[/ - (CMOSCPU : CMOSCPU.SCH)]
      </header>
      <nav className="flex h-[23px] items-center gap-3.5 overflow-hidden border-b-[3px] border-[#e5172f] bg-[#363636] pt-0.5 pl-px text-[11px] leading-none">
        {MENU.map((m) => (
          <button key={m} type="button" className="shrink-0 whitespace-nowrap">{m}</button>
        ))}
      </nav>
      <Toolbar />
      <div className="flex bg-[#363636]">
        <ProjectPanel />
        <div className="min-w-0 grow">
          <Tabs />
          <div className="ml-[7px] flex overflow-hidden border-l-[6px] border-[#474747] bg-white">
            <Schematic />
          </div>
          <div className="ml-[6px] border-b-[6px] border-[#4a4a4a]">
            <div className="flex h-[18px] items-center border-b border-[#383838] bg-[#434343]">
              <div className="h-full w-[14px] bg-[#383838]" />
              <button type="button" aria-label="Scroll left" className="ml-1.5">
                <svg viewBox="0 0 5 9" className="h-[9px] w-[5px]"><path d="M5 0L0 4.500 5 9z" fill="#a0a0a0" /></svg>
              </button>
            </div>
          </div>
        </div>
      </div>
      <Log />
      <footer className="grid h-[22px] grid-cols-[1fr_auto_1fr] items-center overflow-hidden bg-[#545454] pt-0.5 text-[11px] leading-none whitespace-nowrap">
        <span />
        <span className="pl-[168px]">0 items selected</span>
        <span className="flex justify-end gap-[15px] overflow-hidden">
          <span>Scale= 68%</span>
          <span className="w-[39px] overflow-hidden">X=0&nbsp; Y=0</span>
        </span>
      </footer>
      <div className="h-0.5 bg-[#b8b4b6]" />
    </div>
  );
}

export default function App() {
  return (
    <main className="min-h-screen overflow-hidden bg-[radial-gradient(ellipse_420px_260px_at_6%_88%,#00001ccc,transparent),linear-gradient(100deg,#000036_0%,#000530_32%,#000a38_55%,#001254_76%,#001a72_100%)] pt-[127px] pr-[287px] pl-[134px]">
      <div className="mx-[139px] rounded-t-[44px] border-x-4 border-t-4 border-[#e8e8e8] bg-white">
        <div className="rounded-t-[40px] border border-[#c9c9d6] px-9 pt-[47px] pb-[52px]">
          <CaptureWindow />
        </div>
      </div>
      <div className="flex h-9 justify-center rounded-b-[20px] border-b border-[#a9a9b8] bg-[#e8e8e8]">
        <div className="h-[18px] w-[199px] rounded-b-[18px] bg-[#cbcbcb]" />
      </div>
      <div className="mx-[31px] h-[7px] rounded-b-[7px] bg-[#cbcbcb]" />
    </main>
  );
}
